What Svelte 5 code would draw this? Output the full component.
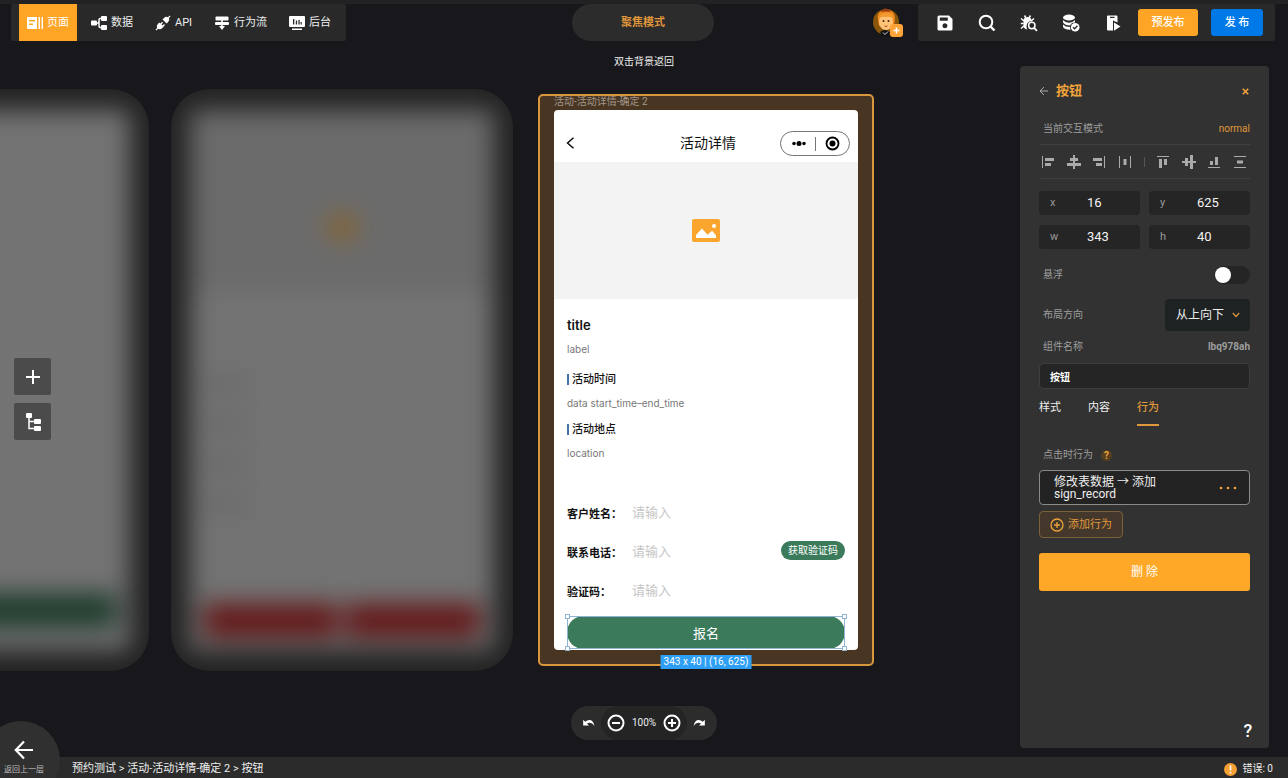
<script>
  let tab = $state('行为');
  let floating = $state(false);
  let direction = $state('从上向下');
  let name = $state('按钮');
  let zoom = $state(100);
  let box = $state({ x: 16, y: 625, w: 343, h: 40 });

  const tabs = ['样式', '内容', '行为'];
  const nav = [
    { id: 'page', label: '页面' },
    { id: 'data', label: '数据' },
    { id: 'api', label: 'API' },
    { id: 'flow', label: '行为流' },
    { id: 'admin', label: '后台' }
  ];
  const fields = [
    { id: 'customer', label: '客户姓名：' },
    { id: 'phone', label: '联系电话：', code: true },
    { id: 'code', label: '验证码：' }
  ];
  const sections = [
    { title: '活动时间', text: 'data start_time–end_time' },
    { title: '活动地点', text: 'location' }
  ];
  // artboard positions on the canvas
  const boards = {
    list: { x: -193, y: 89 },
    detail: { x: 171, y: 89 },
    focus: { x: 538, y: 94 }
  };
</script>

<div class="editor">
  <div class="canvas">
    <div class="board blurred" style="left: {boards.list.x}px; top: {boards.list.y}px">
      <div class="ghost">
        <div class="ghost-bar green"></div>
      </div>
    </div>
    <div class="board blurred" style="left: {boards.detail.x}px; top: {boards.detail.y}px">
      <div class="ghost">
        <div class="ghost-image"><i></i></div>
        <div class="ghost-lines"><i></i><i></i><i></i><i></i></div>
        <div class="ghost-bar red"><i></i><i></i></div>
      </div>
    </div>

    <div class="board focus" style="left: {boards.focus.x}px; top: {boards.focus.y}px">
      <div class="board-name">活动-活动详情-确定 2</div>
      <div class="phone">
        <div class="phone-nav">
          <button class="chevron" aria-label="返回">
            <svg width="9" height="12" viewBox="0 0 9 12" fill="none" stroke="#000" stroke-width="1.4"><path d="M7.5 .8 1.5 6l6 5.2" /></svg>
          </button>
          <span class="phone-title">活动详情</span>
          <div class="capsule">
            <svg width="68" height="23" viewBox="0 0 68 23">
              <circle cx="13" cy="11.500" r="1.700" /><circle cx="18" cy="11.500" r="2.500" /><circle cx="23" cy="11.500" r="1.700" />
              <path d="M34.500 5v14" stroke="#777" />
              <circle cx="51.500" cy="11.500" r="6" fill="none" stroke="#000" stroke-width="1.800" /><circle cx="51.500" cy="11.500" r="3" />
            </svg>
          </div>
        </div>
        <div class="picture">
          <svg width="28" height="23" viewBox="0 0 28 23">
            <rect width="28" height="23" rx="2" fill="#faa52d" />
            <path d="M4 19v-3l6-6.500 5.500 6.300 4.500-4 4 4.500V19z" fill="#fff" />
            <circle cx="22" cy="7" r="2" fill="#fff" />
          </svg>
        </div>
        <div class="phone-body">
          <div class="title">title</div>
          <div class="label">label</div>
          {#each sections as s}
            <div class="section">
              <div class="heading">{s.title}</div>
              <div class="text">{s.text}</div>
            </div>
          {/each}
          <div class="form">
            {#each fields as f}
              <div class="field">
                <label for={f.id}>{f.label}</label>
                <input id={f.id} type="text" placeholder="请输入" />
                {#if f.code}<button class="get-code">获取验证码</button>{/if}
              </div>
            {/each}
          </div>
          <div class="selected">
            <button class="submit">报名</button>
            <i class="handle tl"></i><i class="handle tr"></i><i class="handle bl"></i><i class="handle br"></i>
            <span class="size">{box.w} x {box.h} | ({box.x}, {box.y})</span>
          </div>
        </div>
      </div>
    </div>
  </div>

  <header>
    <nav class="bar">
      {#each nav as n}
        <button class="nav-item" class:active={n.id === 'page'}>
          <svg width="16" height="16" viewBox="0 0 16 16" fill="#fff">
            {#if n.id === 'page'}
              <path fill-rule="evenodd" d="M1 2h9v12H1a1 1 0 0 1-1-1V3a1 1 0 0 1 1-1zm1 3v1.500h6V5zm0 3.500V10h4V8.500z" /><path d="M11.500 2H13v12h-1.500zM14.500 2H16v12h-1.500z" />
            {:else if n.id === 'data'}
              <rect x="0" y="5.500" width="6" height="5" rx="1" /><rect x="10" y="1" width="6" height="5" rx="1" /><rect x="10" y="10" width="6" height="5" rx="1" />
              <path d="M5 8h3M11 3.500H9.200Q8 3.500 8 5v6q0 1.500 1.200 1.500H11" fill="none" stroke="#fff" stroke-width="1.500" />
            {:else if n.id === 'api'}
              <path d="M7.500 4.500 9 3q2-2 4-.8L14.500.500l1 1L13.900 3q1.200 2-.8 4l-1.500 1.500zM4.400 7.400l1 1L7 6.800l1 1-1.500 1.600 1 1L9 8.900l1 1-1.500 1.500.3.300L7.300 13q-2.200 2-4.200.8L1.500 15.500l-1-1L2.200 13q-1.200-2 .8-4.200z" />
            {:else if n.id === 'flow'}
              <rect x="1.500" y="1.500" width="13" height="4" rx="1" /><rect x="1" y="7" width="14" height="3" rx="1" />
              <path d="M7.200 5h1.600v6H11l-3 4-3-4h2.200z" />
            {:else}
              <path fill-rule="evenodd" d="M1 1h14a1 1 0 0 1 1 1v9a1 1 0 0 1-1 1H1a1 1 0 0 1-1-1V2a1 1 0 0 1 1-1zm3 3v5.500h1.300V4zm2.800 1.500v4h1.300v-4zM9.400 5v4.500h1.300V5zm2.200 2v2.500h1.200V7z" /><rect x="3" y="13.500" width="10" height="1.500" />
            {/if}
          </svg>
          {n.label}
        </button>
      {/each}
    </nav>

    <button class="mode">聚焦模式</button>

    <div class="right">
      <svg class="avatar" width="30" height="30" viewBox="0 0 30 30">
        <circle cx="13" cy="14" r="13" fill="#8a560b" />
        <path d="M5 12Q3 3 12 2q10-1 10 9l-1 7H6z" fill="#f08a20" />
        <ellipse cx="13" cy="14" rx="7" ry="8" fill="#ffc477" />
        <path d="M5 11q1-6 8-6t8 6q-4-3-8-2-5-1-8 2z" fill="#f39a30" />
        <path d="M8 4q2-4 5-3.500T18 4q-5-1-10 0z" fill="#9c3c14" />
        <circle cx="10.500" cy="13" r="1" fill="#4a220a" /><circle cx="15.500" cy="13" r="1" fill="#4a220a" />
        <path d="M11.500 18q1.500 1 3 0" stroke="#a2431a" fill="none" />
        <path d="M7 24q5-4 10 0l-1 4H9z" fill="#101014" /><path d="m10 24.500 2 2 3-3" stroke="#ddd" fill="none" />
        <rect x="17" y="16" width="13" height="13" rx="3" fill="#ffa436" />
        <path d="M23.500 19.500v6M20.500 22.500h6" stroke="#fff" stroke-width="1.500" />
      </svg>
      <div class="bar tools">
        <button class="tool" aria-label="保存">
          <svg width="18" height="18" viewBox="0 0 18 18"><path fill="#fff" fill-rule="evenodd" d="M3 1.500h10L16.500 5v10a1.500 1.500 0 0 1-1.500 1.500H3A1.500 1.500 0 0 1 1.500 15V3A1.500 1.500 0 0 1 3 1.500zm.8 2v3.300h8V3.500zM9 9.200a2.500 2.500 0 1 0 0 5 2.500 2.500 0 0 0 0-5z" /></svg>
        </button>
        <button class="tool" aria-label="搜索">
          <svg width="18" height="18" viewBox="0 0 18 18" fill="none" stroke="#fff"><circle cx="8" cy="8" r="6.300" stroke-width="2" /><path d="m12.500 12.500 4 4" stroke-width="2.400" /></svg>
        </button>
        <button class="tool" aria-label="调试">
          <svg width="18" height="18" viewBox="0 0 18 18" fill="none" stroke="#fff"><path d="M3.500 6.500Q3.500 3 7.500 3t4 3.500v.5q-5 .5-5 5.500 0 1.500.8 3Q3.500 15 3.500 11z" fill="#fff" stroke="none" /><path d="M4.500 1.500 6 4M10.500 1.500 9 4M1 4.500 4 7M.8 9.500h3M1 14.500l3.500-3M14 4.500 11 7" stroke-width="1.500" /><circle cx="11.800" cy="11.500" r="3.200" stroke-width="1.500" /><path d="m14 13.800 3 3" stroke-width="1.800" /></svg>
        </button>
        <button class="tool" aria-label="数据库">
          <svg width="18" height="18" viewBox="0 0 18 18"><ellipse cx="7" cy="3.500" rx="6" ry="3" fill="#fff" /><path d="M1 6q2.500 2.800 6 2.800T13 6v2.500q-4 0-4.800 3Q3 11.500 1 8.500zM1 10.500q2.500 2.600 7 2.600 0 1.500.7 2.600Q3 16 1 13z" fill="#fff" /><circle cx="13.200" cy="13.200" r="4.300" fill="#fff" /><path d="m11 13.200 1.600 1.600 2.800-3" fill="none" stroke="#2a2a2a" stroke-width="1.300" /></svg>
        </button>
        <button class="tool" aria-label="预览">
          <svg width="18" height="18" viewBox="0 0 18 18"><path fill="#fff" fill-rule="evenodd" d="M4 1.500h8.500a1 1 0 0 1 1 1v6L9 6.500v10H4a1 1 0 0 1-1-1v-13a1 1 0 0 1 1-1zm2 1.200v1.300h4.500V2.700z" /><path d="m10 8.500 6.500 4-6.500 4.300z" fill="#fff" /></svg>
        </button>
        <button class="publish pre">预发布</button>
        <button class="publish">发 布</button>
      </div>
    </div>
  </header>

  <main>
    <div class="side">
      <button aria-label="添加"><svg width="16" height="16" viewBox="0 0 16 16" stroke="#fff" stroke-width="2"><path d="M8 1v14M1 8h14" /></svg></button>
      <button aria-label="组件树"><svg width="16" height="18" viewBox="0 0 16 18" fill="#fff"><rect x="1" y="0" width="6" height="5" rx="1" /><rect x="9" y="6" width="7" height="5" rx="1" /><rect x="9" y="13" width="7" height="5" rx="1" /><path d="M4 4v11.500h6M4 8.500h6" fill="none" stroke="#fff" stroke-width="1.500" /></svg></button>
    </div>

    <div class="middle">
      <p>双击背景返回</p>
      <div class="zoom">
        <button aria-label="撤销"><svg width="14" height="10" viewBox="0 0 16 12"><path d="M1 2v7h7L5.500 6.700Q10.500 3.500 14.500 9.500q-1.500-7-6-7-3 0-5 2z" fill="#fff" /></svg></button>
        <div class="zoom-level">
          <button aria-label="缩小" onclick={() => (zoom -= 10)}><svg width="18" height="18" viewBox="0 0 18 18" fill="none" stroke="#fff" stroke-width="2"><circle cx="9" cy="9" r="7.500" /><path d="M5 9h8" /></svg></button>
          <span>{zoom}%</span>
          <button aria-label="放大" onclick={() => (zoom += 10)}><svg width="18" height="18" viewBox="0 0 18 18" fill="none" stroke="#fff" stroke-width="2"><circle cx="9" cy="9" r="7.500" /><path d="M5 9h8M9 5v8" /></svg></button>
        </div>
        <button aria-label="重做"><svg width="14" height="10" viewBox="0 0 16 12"><path d="M15 2v7H8l2.500-2.300Q5.500 3.500 1.500 9.500q1.500-7 6-7 3 0 5 2z" fill="#fff" /></svg></button>
      </div>
    </div>

    <aside>
      <div class="panel-head">
        <button aria-label="返回"><svg width="9" height="10" viewBox="0 0 9 10" fill="none" stroke="#aaa"><path d="M9 5H1M5 1 1 5l4 4" /></svg></button>
        <h2>按钮</h2>
        <button class="close" aria-label="关闭"><svg width="7" height="7" viewBox="0 0 7 7" stroke="#f0a43a" stroke-width="1.600"><path d="m.8.8 5.400 5.400M6.200.8.8 6.200" /></svg></button>
      </div>
      <div class="row mode-row"><span>当前交互模式</span><span class="orange">normal</span></div>

      <div class="aligns">
        <button aria-label="左对齐"><svg viewBox="0 0 14 14"><path d="M1 1h1v12H1zM4 3h9v3H4zM4 8h6v3H4z" /></svg></button>
        <button aria-label="水平居中"><svg viewBox="0 0 14 14"><path d="M6 0h2v14H6zM3 3h8v3H3zM0 8h14v3H0z" /></svg></button>
        <button aria-label="右对齐"><svg viewBox="0 0 14 14"><path d="M12 1h1v12h-1zM1 3h9v3H1zM4 8h6v3H4z" /></svg></button>
        <button aria-label="水平分布"><svg viewBox="0 0 14 14"><path d="M1 1h1v12H1zM12 1h1v12h-1zM5.500 4h3v6h-3z" /></svg></button>
        <i></i>
        <button aria-label="顶对齐"><svg viewBox="0 0 14 14"><path d="M1 1h12v1H1zM3 4h3v9H3zM8 4h3v6H8z" /></svg></button>
        <button aria-label="垂直居中"><svg viewBox="0 0 14 14"><path d="M0 6h14v2H0zM3 3h3v8H3zM8 0h3v14H8z" /></svg></button>
        <button aria-label="底对齐"><svg viewBox="0 0 14 14"><path d="M1 12h12v1H1zM3 6h3v4H3zM8 2h3v8H8z" /></svg></button>
        <button aria-label="垂直分布"><svg viewBox="0 0 14 14"><path d="M1 1h12v1H1zM1 12h12v1H1zM4 5.500h6v3H4z" /></svg></button>
      </div>

      <div class="coords">
        {#each ['x', 'y', 'w', 'h'] as k}
          <label><span>{k}</span><input type="text" bind:value={box[k]} /></label>
        {/each}
      </div>

      <div class="row float-row">
        <label for="floating">悬浮</label>
        <input id="floating" class="switch" type="checkbox" bind:checked={floating} />
      </div>
      <div class="row">
        <label for="direction">布局方向</label>
        <div class="select">
          <select id="direction" bind:value={direction}>
            <option>从上向下</option>
            <option>从左向右</option>
          </select>
          <svg width="8" height="6" viewBox="0 0 8 6" fill="none" stroke="#d9953a" stroke-width="1.200"><path d="m.8 1 3.200 3.500L7.200 1" /></svg>
        </div>
      </div>
      <div class="row name-row"><label for="name">组件名称</label><b>lbq978ah</b></div>
      <input id="name" class="name" type="text" bind:value={name} />

      <div class="tabs" role="tablist">
        {#each tabs as t}
          <button role="tab" aria-selected={tab === t} class:active={tab === t} onclick={() => (tab = t)}>{t}</button>
        {/each}
      </div>

      <div class="row event"><span>点击时行为</span><span class="help">?</span></div>
      <button class="action">
        <span>修改表数据 → 添加 sign_record</span>
        <svg width="18" height="4" viewBox="0 0 18 4" fill="#f0a43a"><circle cx="2" cy="2" r="1.300" /><circle cx="9" cy="2" r="1.300" /><circle cx="16" cy="2" r="1.300" /></svg>
      </button>
      <button class="add">
        <svg width="14" height="14" viewBox="0 0 14 14" fill="none" stroke="#f0a43a" stroke-width="1.300"><circle cx="7" cy="7" r="6" /><path d="M4 7h6M7 4v6" /></svg>
        添加行为
      </button>
      <button class="delete">删 除</button>
      <button class="question" aria-label="帮助">?</button>
    </aside>
  </main>

  <footer>
    <span>预约测试 &gt; 活动-活动详情-确定 2 &gt; 按钮</span>
    <span class="errors">
      <svg width="13" height="13" viewBox="0 0 13 13"><circle cx="6.500" cy="6.500" r="6.500" fill="#f5a133" /><path d="M6.500 2.500v5M6.500 8.800v1.600" stroke="#fff" stroke-width="1.600" /></svg>
      错误: 0
    </span>
  </footer>
  <button class="back">
    <svg width="20" height="20" viewBox="0 0 20 20" fill="none" stroke="#fff" stroke-width="2.200"><path d="M19 10H2M10 1.500 1.800 10l8.200 8.500" /></svg>
    返回上一层
  </button>
</div>

<style>
  :global(body) {
    background: #18181c;
  }
  .editor {
    position: relative;
    display: flex;
    flex-direction: column;
    min-height: 100vh;
    overflow: hidden;
    background: #18181c;
    color: #eee;
    font: 11px/16px Roboto, "Noto Sans CJK SC", sans-serif;
  }
  .editor * {
    box-sizing: border-box;
  }
  button, input, select {
    margin: 0;
    padding: 0;
    border: 0;
    background: none;
    color: inherit;
    font: inherit;
    outline: none;
  }
  button {
    cursor: pointer;
  }
  svg {
    display: block;
    flex: none;
  }

  /* canvas */
  .canvas {
    position: absolute;
    inset: 0;
  }
  .board {
    position: absolute;
    width: 336px;
    border-radius: 5px;
  }
  .blurred {
    width: 342px;
    padding: 21px 19px;
    overflow: hidden;
    border-radius: 38px;
    background: #232323;
  }
  .ghost {
    display: flex;
    flex-direction: column;
    height: 540px;
    background: #737373;
    filter: blur(12px);
  }
  .ghost-image {
    display: grid;
    place-items: center;
    height: 182px;
    padding-top: 52px;
    background: #6b6b6b;
  }
  .ghost-image i {
    width: 28px;
    height: 24px;
    background: #85632f;
  }
  .ghost-lines {
    display: grid;
    gap: 28px;
    padding: 86px 14px 0;
  }
  .ghost-lines i {
    width: 46px;
    height: 12px;
    background: #666;
  }
  .ghost-bar {
    display: flex;
    gap: 8px;
    height: 33px;
    margin: auto 14px 13px;
  }
  .green {
    margin-bottom: 23px;
    background: #1c3b2b;
  }
  .red i {
    flex: 1;
    background: #641718;
  }
  .focus {
    padding: 0 14px 14px;
    border: 2px solid #d9973c;
    background: #483522;
  }
  .board-name {
    height: 14px;
    color: #a3988c;
    font-size: 10px;
    line-height: 12px;
  }

  .phone {
    border-radius: 4px;
    background: #fff;
    color: #111;
    font-family: Inter, "Noto Sans CJK SC", sans-serif;
  }
  .phone-nav {
    display: grid;
    grid-template-columns: 1fr auto 1fr;
    align-items: center;
    height: 52px;
    padding: 14px 8px 0 12px;
  }
  .phone-title {
    font-size: 14px;
  }
  .capsule {
    justify-self: end;
    border: 1px solid #777;
    border-radius: 13px;
  }
  .picture {
    display: grid;
    place-items: center;
    height: 137px;
    background: #f3f3f3;
  }
  .phone-body {
    padding: 14px 13px 1px;
    line-height: 24px;
  }
  .title {
    font-size: 13px;
    font-weight: 600;
  }
  .label, .text {
    color: #777;
    font-size: 10px;
  }
  .label {
    margin-bottom: 6px;
  }
  .section {
    margin-bottom: 2px;
  }
  .heading {
    display: flex;
    align-items: center;
    gap: 3px;
    font-weight: 500;
  }
  .heading::before {
    content: "";
    width: 2px;
    height: 11px;
    background: #4672a8;
  }
  .form {
    margin-top: 27px;
  }
  .field {
    display: flex;
    align-items: center;
    height: 39px;
  }
  .field label {
    width: 65px;
    padding-top: 4px;
    font-weight: 700;
    white-space: nowrap;
  }
  .field input {
    flex: 1;
    min-width: 0;
    font-size: 13px;
  }
  .field input::placeholder {
    color: #c6c6c6;
  }
  .get-code {
    padding: 0 7px;
    border-radius: 10px;
    background: #3b7b5b;
    color: #fff;
    font-size: 10px;
    line-height: 19px;
  }
  .selected {
    position: relative;
    margin-top: 7px;
    outline: 1px solid #8fb4d4;
    outline-offset: -1px;
  }
  .submit {
    display: block;
    width: 100%;
    height: 33px;
    border-radius: 17px;
    background: #3b7b5b;
    color: #fff;
    font-size: 13px;
  }
  .handle {
    position: absolute;
    width: 5px;
    height: 5px;
    border: 1px solid #8fb4d4;
    background: #fff;
  }
  .tl { top: -2px; left: -2px; }
  .tr { top: -2px; right: -2px; }
  .bl { bottom: -2px; left: -2px; }
  .br { bottom: -2px; right: -2px; }
  .size {
    position: absolute;
    top: 39px;
    left: 50%;
    padding: 0 3px;
    transform: translateX(-50%);
    background: #2e9ff5;
    color: #fff;
    font: 10px/14px Roboto, sans-serif;
    white-space: nowrap;
  }

  /* top bar */
  header {
    position: relative;
    display: grid;
    grid-template-columns: 1fr auto 1fr;
    padding: 0 13px 0 11px;
    border-top: 4px solid #222224;
  }
  .bar {
    display: flex;
    height: 37px;
    border-radius: 2px;
    background: #29292a;
  }
  nav {
    justify-self: start;
    gap: 6px;
    padding: 0 7px 0 8px;
  }
  .nav-item {
    display: flex;
    align-items: center;
    gap: 4px;
    padding: 0 8px;
    white-space: nowrap;
  }
  .nav-item.active {
    background: #ffa526;
    color: #fff;
  }
  .mode {
    width: 142px;
    border-radius: 19px;
    background: #2c2c2c;
    color: #e0963a;
    font-weight: 700;
  }
  .right {
    display: flex;
    justify-content: flex-end;
    align-items: center;
    gap: 15px;
  }
  .tools {
    align-items: center;
    padding: 0 12px 0 6px;
  }
  .tool {
    display: grid;
    place-items: center;
    width: 42px;
    height: 37px;
  }
  .publish {
    width: 52px;
    height: 27px;
    border-radius: 3px;
    background: #0079e8;
    color: #fff;
    font-weight: 500;
  }
  .pre {
    width: 60px;
    margin: 0 13px 0 4px;
    background: #ffa526;
  }

  /* floating layer */
  main {
    position: relative;
    display: grid;
    grid-template-columns: 1fr auto 1fr;
    flex: 1;
  }
  .side {
    display: flex;
    flex-direction: column;
    align-self: center;
    gap: 8px;
    padding-left: 14px;
  }
  .side button {
    display: grid;
    place-items: center;
    width: 37px;
    height: 37px;
    border-radius: 2px;
    background: #4b4b4b;
  }
  .middle {
    display: flex;
    flex-direction: column;
    justify-content: space-between;
    align-items: center;
    padding: 13px 0 17px;
  }
  .middle p {
    margin: 0;
    font-size: 10px;
  }
  .zoom {
    display: flex;
    height: 34px;
    border-radius: 17px;
    background: #2c2c2c;
  }
  .zoom > button {
    display: grid;
    place-items: center;
    width: 30px;
    padding-left: 6px;
  }
  .zoom > button:last-child {
    padding: 0 6px 0 0;
  }
  .zoom-level {
    display: flex;
    align-items: center;
    justify-content: space-between;
    width: 86px;
    padding: 0 6px;
    border-radius: 17px;
    background: #242424;
    font-size: 10px;
  }

  /* properties panel */
  aside {
    display: flex;
    flex-direction: column;
    justify-self: end;
    width: 249px;
    margin: 25px 19px 9px 0;
    padding: 14px 19px 6px;
    border-radius: 4px;
    background: #323232;
  }
  .panel-head {
    display: flex;
    align-items: center;
    gap: 8px;
    height: 22px;
  }
  .panel-head h2 {
    flex: 1;
    margin: 0;
    color: #f0a43a;
    font-size: 13px;
    font-weight: 700;
  }
  .panel-head .close {
    margin-right: 1px;
  }
  .row {
    display: flex;
    align-items: center;
    justify-content: space-between;
    padding-left: 4px;
    color: #9d9d9d;
    font-size: 10px;
  }
  .mode-row {
    margin: 19px 0 7px;
  }
  .orange {
    color: #e0983c;
  }
  .aligns {
    display: flex;
    align-items: center;
    justify-content: space-between;
    height: 35px;
    padding: 0 3px 0 2px;
    border: solid #404040;
    border-width: 1px 0;
  }
  .aligns svg {
    width: 14px;
    height: 14px;
    fill: #aaa;
  }
  .aligns i {
    width: 1px;
    height: 10px;
    background: #555;
  }
  .coords {
    display: grid;
    grid-template-columns: repeat(2, minmax(0, 1fr));
    gap: 10px 9px;
    margin-top: 12px;
  }
  .coords label {
    display: flex;
    align-items: center;
    height: 24px;
    padding-left: 11px;
    border-radius: 4px;
    background: #252525;
    color: #999;
  }
  .coords span {
    width: 37px;
  }
  .coords input {
    flex: 1;
    min-width: 0;
    color: #f2f2f2;
    font-size: 13px;
  }
  .float-row {
    margin: 17px 0 15px;
  }
  .switch {
    display: flex;
    width: 36px;
    height: 18px;
    padding: 1px;
    border-radius: 9px;
    background: #252525;
    appearance: none;
  }
  .switch::before {
    content: "";
    width: 16px;
    height: 16px;
    border-radius: 50%;
    background: #fff;
  }
  .switch:checked {
    justify-content: flex-end;
  }
  .select {
    display: flex;
    align-items: center;
    position: relative;
  }
  .select select {
    width: 85px;
    height: 32px;
    padding-left: 11px;
    border-radius: 4px;
    background: #1f2223;
    color: #eee;
    font-size: 12px;
    appearance: none;
  }
  .select svg {
    position: absolute;
    right: 10px;
    pointer-events: none;
  }
  .name-row {
    margin: 8px 0;
  }
  .name {
    height: 26px;
    padding: 0 10px;
    border: 1px solid #3e3e3e;
    border-radius: 4px;
    background: #252525;
    color: #fff;
    font-size: 10px;
    font-weight: 700;
  }
  .tabs {
    display: flex;
    gap: 27px;
    margin-top: 5px;
  }
  .tabs button {
    height: 32px;
    padding-bottom: 3px;
    border-bottom: 2px solid transparent;
  }
  .tabs .active {
    border-color: #e0983c;
    color: #e0983c;
    font-weight: 500;
  }
  .event {
    justify-content: flex-start;
    gap: 8px;
    margin: 21px 0 7px;
  }
  .help {
    width: 11px;
    border-radius: 50%;
    background: #54401f;
    color: #f0a43a;
    font-weight: 700;
    line-height: 11px;
    text-align: center;
  }
  .action {
    display: flex;
    align-items: center;
    justify-content: space-between;
    height: 35px;
    padding: 0 12px 0 14px;
    border: 1px solid #8a8a8a;
    border-radius: 4px;
    background: #232323;
    font-size: 12px;
    line-height: 12px;
    text-align: left;
  }
  .action span {
    width: 120px;
  }
  .add {
    display: flex;
    align-items: center;
    align-self: flex-start;
    gap: 4px;
    height: 27px;
    margin-top: 6px;
    padding: 0 10px;
    border: 1px solid #7c6138;
    border-radius: 4px;
    background: #43382b;
    color: #e0983c;
  }
  .delete {
    height: 38px;
    margin-top: 15px;
    border-radius: 3px;
    background: #ffa726;
    color: #fff;
    font-size: 12px;
  }
  .question {
    align-self: flex-end;
    width: 12px;
    margin-top: auto;
    margin-right: -4px;
    color: #fff;
    font-size: 18px;
    font-weight: 500;
    line-height: 22px;
  }

  /* status bar */
  footer {
    position: relative;
    display: flex;
    align-items: center;
    justify-content: space-between;
    height: 21px;
    padding: 3px 15px 0 72px;
    background: #2b2b2b;
    line-height: 16px;
  }
  .errors {
    display: flex;
    align-items: center;
    gap: 5px;
    font-size: 10px;
  }
  .back {
    position: absolute;
    left: -18px;
    bottom: -21px;
    display: flex;
    flex-direction: column;
    align-items: center;
    gap: 2px;
    width: 78px;
    height: 78px;
    padding: 19px 0 0 6px;
    border-radius: 50%;
    background: #303030;
    color: #bbb;
    font-size: 8px;
    line-height: 16px;
  }
</style>
